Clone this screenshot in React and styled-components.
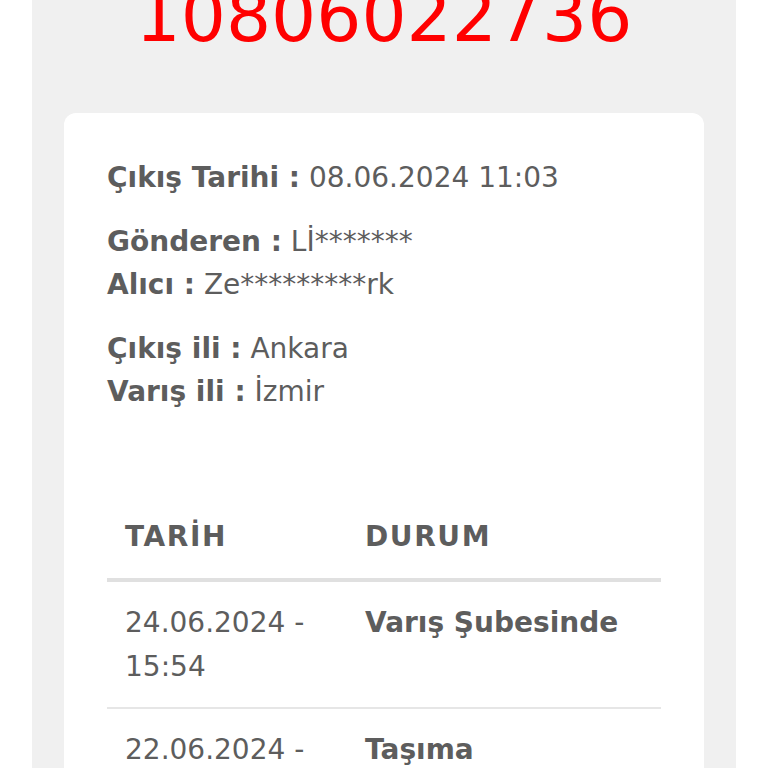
import React from "react";
import styled, { createGlobalStyle } from "styled-components";

const Global = createGlobalStyle`
  html, body { margin: 0; padding: 0; background: #ffffff; }
  body { font-family: "DejaVu Sans", "Noto Sans", sans-serif; }
  * { box-sizing: border-box; }
`;

const Panel = styled.div`
  margin: 0 32px;
  min-height: 100vh;
  background: #f0f0f0;
  padding: 0 32px 40px;
  overflow: hidden;
`;

const Title = styled.h1`
  margin: -19px 0 61px;
  font-family: "DejaVu Sans", sans-serif;
  font-weight: 400;
  font-size: 71px;
  line-height: 71px;
  color: #ff0000;
  text-align: center;
`;

const Card = styled.div`
  background: #ffffff;
  border-radius: 12px;
  padding: 43px;
  color: #5d5d5d;
`;

const Info = styled.p`
  margin: 0 0 21px;
  font-size: 28px;
  line-height: 43px;
`;

const Label = styled.b`
  font-weight: 700;
`;

const Table = styled.table`
  width: 100%;
  margin-top: 81px;
  border-collapse: collapse;
  table-layout: fixed;
  font-size: 28px;
  line-height: 44px;
`;

const Th = styled.th`
  text-align: left;
  font-weight: 700;
  letter-spacing: 1.6px;
  padding: 21px 18px 19px;
  border-bottom: 4px solid #e0e0e0;
  width: ${(p) => (p.$first ? "240px" : "auto")};
`;

const Td = styled.td`
  vertical-align: top;
  padding: 19px 18px 18px;
  border-bottom: 2px solid #e6e6e6;
  font-weight: ${(p) => (p.$strong ? 700 : 400)};
`;

const rows = [
  ["24.06.2024 - 15:54", "Varış Şubesinde"],
  ["22.06.2024 - 18:21", "Taşıma Aşamasında"],
  ["08.06.2024 - 11:03", "Kabul Edildi"],
];

export default function App() {
  return (
    <>
      <Global />
      <Panel>
        <Title>10806022736</Title>
        <Card>
          <Info>
            <Label>Çıkış Tarihi :</Label> 08.06.2024 11:03
          </Info>
          <Info>
            <Label>Gönderen :</Label> Lİ*******
            <br />
            <Label>Alıcı :</Label> Ze*********rk
          </Info>
          <Info>
            <Label>Çıkış ili :</Label> Ankara
            <br />
            <Label>Varış ili :</Label> İzmir
          </Info>
          <Table>
            <thead>
              <tr>
                <Th $first>TARİH</Th>
                <Th>DURUM</Th>
              </tr>
            </thead>
            <tbody>
              {rows.map(([d, s]) => (
                <tr key={d}>
                  <Td>{d}</Td>
                  <Td $strong>{s}</Td>
                </tr>
              ))}
            </tbody>
          </Table>
        </Card>
      </Panel>
    </>
  );
}
